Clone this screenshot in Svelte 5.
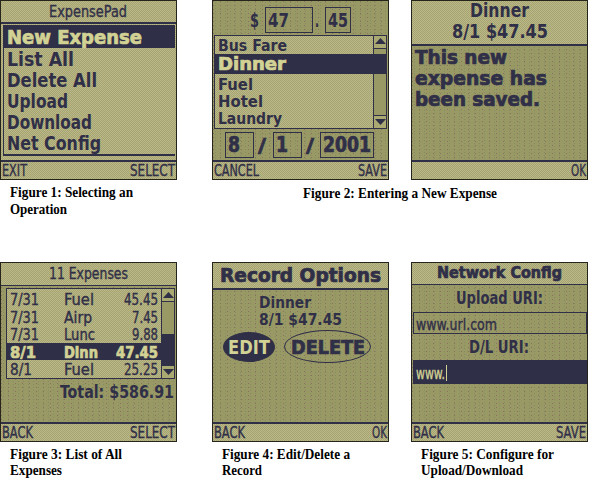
<script>
  const operations = [
    ['List All', 67],
    ['Delete All', 90],
    ['Upload', 61],
    ['Download', 85],
    ['Net Config', 94]
  ];
  const categories = [
    ['Fuel', 35],
    ['Hotel', 45],
    ['Laundry', 64]
  ];
  const expenses = [
    { date: '7/31', dw: 29, name: 'Fuel', nw: 30, amount: '45.45', aw: 34 },
    { date: '7/31', dw: 29, name: 'Airp', nw: 28, amount: '7.45', aw: 26 },
    { date: '7/31', dw: 29, name: 'Lunc', nw: 31, amount: '9.88', aw: 26 },
    { date: '8/1', dw: 26, name: 'Dinn', nw: 34, amount: '47.45', aw: 42, selected: true },
    { date: '8/1', dw: 22, name: 'Fuel', nw: 30, amount: '25.25', aw: 34 }
  ];
</script>

<!-- A run of text whose box is exactly its advance width by its cap height. -->
{#snippet glyphs(text, width, cap, kind = 'bold')}
  <svg class="glyphs {kind}" {width} height={cap} role="img" aria-label={text}>
    <text x="0" y={cap} textLength={width} lengthAdjust="spacingAndGlyphs" font-size={cap / (kind === 'serif' ? 0.66 : 0.729)}>{text}</text>
  </svg>
{/snippet}

{#snippet softkeys(left, lw, right, rw)}
  <div class="softkeys">
    <span>{#if left}{@render glyphs(left, lw, 12, 'thin')}{/if}</span>
    {@render glyphs(right, rw, 12, 'thin')}
  </div>
{/snippet}

{#snippet arrow(down)}
  <span class="arrow">
    <svg width="11" height="7"><path d={down ? 'M0 0H11L5.5 6Z' : 'M0 6H11L5.5 0Z'} /></svg>
  </span>
{/snippet}

<main>
  <div class="row">
    <figure>
      <div class="screen light menu">
        <div class="title">{@render glyphs('ExpensePad', 78, 12, 'thin')}</div>
        <div class="oplist">
          <div class="op selected">{@render glyphs('New Expense', 135, 14, 'heavy')}</div>
          {#each operations as [name, w]}
            <div class="op">{@render glyphs(name, w, 14)}</div>
          {/each}
        </div>
        {@render softkeys('EXIT', 25, 'SELECT', 45)}
      </div>
      <figcaption class="two">
        {@render glyphs('Figure 1: Selecting an', 123, 9, 'serif')}
        {@render glyphs('Operation', 57, 9, 'serif')}
      </figcaption>
    </figure>

    <figure class="pair">
      <div class="screens">
        <div class="screen dark entry">
          <div class="money">
            {@render glyphs('$', 9, 14)}
            <span class="box dollars">{@render glyphs('47', 21, 14)}</span>
            <span class="dot">{@render glyphs('.', 4, 14)}</span>
            <span class="box cents">{@render glyphs('45', 20, 14)}</span>
          </div>
          <div class="picker">
            <div class="choices">
              <div class="choice first">{@render glyphs('Bus Fare', 69, 11.5)}</div>
              <div class="choice selected">{@render glyphs('Dinner', 68, 13, 'heavy')}</div>
              {#each categories as [name, w]}
                <div class="choice">{@render glyphs(name, w, 11.5)}</div>
              {/each}
            </div>
            <div class="scroll">{@render arrow(false)}<i class="thumb"></i><i class="track"></i>{@render arrow(true)}</div>
          </div>
          <div class="date">
            <span class="box month">{@render glyphs('8', 12, 15, 'heavy')}</span>
            {@render glyphs('/', 8, 14, 'heavy')}
            <span class="box day">{@render glyphs('1', 12, 15, 'heavy')}</span>
            {@render glyphs('/', 8, 14, 'heavy')}
            <span class="box year">{@render glyphs('2001', 48, 15, 'heavy')}</span>
          </div>
          {@render softkeys('CANCEL', 45, 'SAVE', 29)}
        </div>

        <div class="screen dark saved">
          <div class="summary">
            {@render glyphs('Dinner', 59, 14)}
            {@render glyphs('8/1 $47.45', 96, 14)}
          </div>
          <div class="message">
            {@render glyphs('This new', 92, 14, 'heavy')}
            {@render glyphs('expense has', 132, 14, 'heavy')}
            {@render glyphs('been saved.', 125, 14, 'heavy')}
          </div>
          {@render softkeys('', 0, 'OK', 15)}
        </div>
      </div>
      <figcaption class="center">{@render glyphs('Figure 2: Entering a New Expense', 194, 9, 'serif')}</figcaption>
    </figure>
  </div>

  <div class="row">
    <figure>
      <div class="screen dark history">
        <div class="title">{@render glyphs('11 Expenses', 79, 12, 'thin')}</div>
        <div class="ledger">
          <div class="entries">
            {#each expenses as e}
              <div class="entry-row" class:selected={e.selected}>
                <span class="when">{@render glyphs(e.date, e.dw, 11.5, e.selected ? 'heavy' : 'thin')}</span>
                <span class="what">{@render glyphs(e.name, e.nw, 11.5, e.selected ? 'heavy' : 'thin')}</span>
                {@render glyphs(e.amount, e.aw, 11.5, e.selected ? 'heavy' : 'thin')}
              </div>
            {/each}
          </div>
          <div class="scroll">{@render arrow(false)}<i class="track"></i><i class="thumb"></i>{@render arrow(true)}</div>
        </div>
        <div class="total">{@render glyphs('Total: $586.91', 114, 13)}</div>
        {@render softkeys('BACK', 31, 'SELECT', 45)}
      </div>
      <figcaption>
        {@render glyphs('Figure 3: List of All', 112, 9, 'serif')}
        {@render glyphs('Expenses', 52, 9, 'serif')}
      </figcaption>
    </figure>

    <figure>
      <div class="screen dark options">
        <div class="title">{@render glyphs('Record Options', 161, 14, 'heavy')}</div>
        <div class="record">
          {@render glyphs('Dinner', 52, 12)}
          {@render glyphs('8/1 $47.45', 83, 12)}
        </div>
        <div class="buttons">
          <span class="oval filled">{@render glyphs('EDIT', 42, 14)}</span>
          <span class="oval">{@render glyphs('DELETE', 74, 14, 'heavy')}</span>
        </div>
        {@render softkeys('BACK', 31, 'OK', 15)}
      </div>
      <figcaption>
        {@render glyphs('Figure 4: Edit/Delete a', 128, 9, 'serif')}
        {@render glyphs('Record', 40, 9, 'serif')}
      </figcaption>
    </figure>

    <figure>
      <div class="screen dark config">
        <div class="title">{@render glyphs('Network Config', 125, 12, 'heavy')}</div>
        <div class="label upload">{@render glyphs('Upload URI:', 87, 13)}</div>
        <div class="field">{@render glyphs('www.url.com', 81, 12, 'thin')}</div>
        <div class="label download">{@render glyphs('D/L URI:', 60, 13)}</div>
        <div class="field active">{@render glyphs('www.', 29, 12, 'thin')}<i class="caret"></i></div>
        {@render softkeys('BACK', 31, 'SAVE', 30)}
      </div>
      <figcaption>
        {@render glyphs('Figure 5: Configure for', 133, 9, 'serif')}
        {@render glyphs('Upload/Download', 102, 9, 'serif')}
      </figcaption>
    </figure>
  </div>
</main>

<style>
  :global(body) { background: #fff; }

  main {
    --ink: #302f48;
    --pale: #d2d294;
    --light: conic-gradient(#a5a273 25%, #bbb985 0 50%, #a5a273 0 75%, #bbb985 0) 0 0 / 2px 2px;
    width: 590px;
    height: 492px;
    overflow: hidden;
  }
  .row { display: flex; height: 262px; }
  .row > figure + figure { margin-left: 35px; }
  .row:last-child > figure + figure + figure { margin-left: 22px; }
  figure { margin: 0; width: 177px; flex: none; }
  figure.pair { width: 376px; }
  .screens { display: flex; gap: 22px; }

  .glyphs { display: block; overflow: visible; flex: none; }
  .glyphs text { fill: currentColor; white-space: pre; }
  .thin { font-family: 'DejaVu Sans Condensed', 'DejaVu Sans', sans-serif; }
  .thin text { stroke: currentColor; stroke-width: 0.35px; }
  .bold, .heavy { font-family: 'DejaVu Sans Condensed', 'DejaVu Sans', sans-serif; font-weight: 700; }
  .heavy text { stroke: currentColor; stroke-width: 0.7px; }
  .serif { font-family: 'Liberation Serif', serif; font-weight: 700; }

  figcaption { display: flex; flex-direction: column; gap: 7px; padding: 8px 0 0 10px; color: #000; }
  figcaption.two { gap: 8px; }
  figcaption.center { padding: 9px 0 0 91px; }

  .screen {
    box-sizing: border-box;
    display: flex;
    flex-direction: column;
    width: 177px;
    height: 180px;
    border: 1px solid #25251b;
    color: var(--ink);
  }
  .light { background: var(--light); }
  .dark {
    background:
      conic-gradient(from 0deg at 1px 1px, transparent 75%, #8a7060 0) 0 0 / 7px 4px,
      conic-gradient(from 0deg at 1px 1px, transparent 75%, #858c62 0) 2px 1px / 5px 3px,
      #999966;
  }
  .title { display: flex; box-sizing: border-box; border-bottom: 1.5px solid var(--ink); background: var(--light); }
  .softkeys {
    display: flex;
    box-sizing: border-box;
    justify-content: space-between;
    margin-top: auto;
    height: 19px;
    padding: 2px 1px 0 1px;
    border-top: 2px solid var(--ink);
    background: var(--light);
  }
  .selected { background: var(--ink); color: var(--pale); }
  .box { display: flex; box-sizing: border-box; align-items: center; border: 1.5px solid var(--ink); padding-left: 2px; }

  .menu .title { height: 23px; padding: 4px 0 0 48px; border-bottom-width: 2px; }
  .oplist { margin: 1px 0 0 2px; border: solid var(--ink); border-width: 1px 0 2px 1px; height: 131px; box-sizing: border-box; width: 172px; }
  .op { display: flex; align-items: center; height: 20.8px; padding-left: 3px; }
  .op.selected { height: 22px; margin-bottom: 1px; }

  .money { display: flex; align-items: center; height: 34px; box-sizing: border-box; padding: 4px 0 0 37px; }
  .money .box { height: 26px; }
  .dollars { width: 48px; margin-left: 6px; }
  .dot { margin: 0 6px 0 2px; }
  .cents { width: 26px; }
  .picker, .ledger { display: flex; border: 1px solid var(--ink); box-sizing: border-box; background: var(--light); }
  .picker { height: 95px; margin: 0 1px; }
  .choices { flex: 1; }
  .choice { display: flex; align-items: center; height: 17.3px; padding-left: 3px; }
  .choice.first { height: 18px; }
  .choice.selected { height: 20px; margin-bottom: 1px; }
  .scroll { display: flex; flex-direction: column; box-sizing: border-box; width: 13px; border-left: 1px solid var(--ink); background: #999966; }
  .arrow { display: flex; align-items: center; justify-content: center; height: 13px; background: #aaa972; border-bottom: 1px solid var(--ink); box-sizing: border-box; }
  .arrow:last-child { border-bottom: 0; border-top: 1px solid var(--ink); }
  .arrow path { fill: var(--ink); }
  .thumb { background: var(--ink); }
  .track { flex: 1; }
  .picker .thumb { margin-top: 5px; height: 20px; }
  .date { display: flex; align-items: center; height: 31px; padding: 0 0 0 12px; box-sizing: border-box; }
  .date .box { height: 26px; }
  .month, .day { width: 29px; margin-right: 4px; }
  .day { margin-left: 7px; }
  .year { width: 54px; margin-left: 6px; }

  .summary { display: flex; flex-direction: column; box-sizing: border-box; align-items: center; gap: 7px; height: 45px; padding: 2px 0 0; border-bottom: 2px solid var(--ink); background: var(--light); }
  .message { display: flex; flex-direction: column; gap: 7px; padding: 4px 0 0 3px; }

  .history .title { height: 23px; padding: 4px 0 0 48px; }
  .ledger { height: 91px; margin: 2px 0 0 5px; width: 169px; }
  .entries { flex: 1; padding-top: 1px; }
  .entry-row { display: flex; align-items: center; justify-content: space-between; height: 17.6px; padding: 0 3px 0 3px; }
  .when { width: 54px; }
  .what { flex: 1; }
  .ledger .thumb { height: 31px; }
  .total { display: flex; justify-content: flex-end; padding: 6px 2px 0 0; }

  .options .title { height: 27px; padding: 5px 0 0 7px; border-bottom-width: 2px; }
  .record { display: flex; flex-direction: column; gap: 5px; padding: 6px 0 0 46px; }
  .buttons { display: flex; align-items: center; gap: 9px; padding: 5px 0 0 10px; }
  .oval { display: flex; box-sizing: border-box; align-items: center; justify-content: center; width: 87px; height: 33px; border: 1.5px solid var(--ink); border-radius: 50%; }
  .filled { width: 52px; height: 30px; background: var(--ink); color: var(--pale); }

  .config .title { height: 22px; padding: 3px 0 0 25px; }
  .label { display: flex; }
  .upload { padding: 6px 0 0 44px; }
  .download { padding: 6px 0 0 57px; }
  .field { display: flex; align-items: center; box-sizing: border-box; height: 22px; margin: 8px 0 0 1px; width: 174px; padding: 1px 0 0 2px; border: 1.5px solid var(--ink); }
  .field.active { height: 24px; margin-top: 7px; background: var(--ink); color: var(--pale); }
  .caret { width: 1px; height: 16px; margin-left: 1px; background: var(--pale); }
</style>
